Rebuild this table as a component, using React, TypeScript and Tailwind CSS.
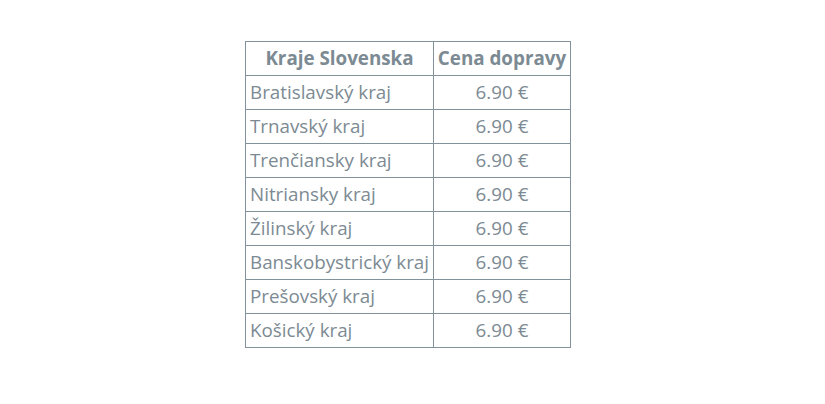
import React from "react";

const rows = [
  "Bratislavský kraj",
  "Trnavský kraj",
  "Trenčiansky kraj",
  "Nitriansky kraj",
  "Žilinský kraj",
  "Banskobystrický kraj",
  "Prešovský kraj",
  "Košický kraj",
];

export default function App() {
  return (
    <div className="w-[825px] h-[404px] bg-white pt-[41px] pl-[245px]" style={{ fontFamily: '"Open Sans", sans-serif' }}>
      <table className="border-collapse table-fixed text-[18.8px] text-[#7c8a93]">
        <thead>
          <tr className="h-[34px]">
            <th className="border border-[#82929b] w-[188px] p-0 font-bold text-center leading-none">Kraje Slovenska</th>
            <th className="border border-[#82929b] w-[137px] p-0 font-bold text-center leading-none">Cena dopravy</th>
          </tr>
        </thead>
        <tbody>
          {rows.map((r) => (
            <tr key={r} className="h-[34px]">
              <td className="border border-[#82929b] pl-[4px] pr-0 py-0 font-normal leading-none whitespace-nowrap">{r}</td>
              <td className="border border-[#82929b] p-0 text-center leading-none">6.90 €</td>
            </tr>
          ))}
        </tbody>
      </table>
    </div>
  );
}
